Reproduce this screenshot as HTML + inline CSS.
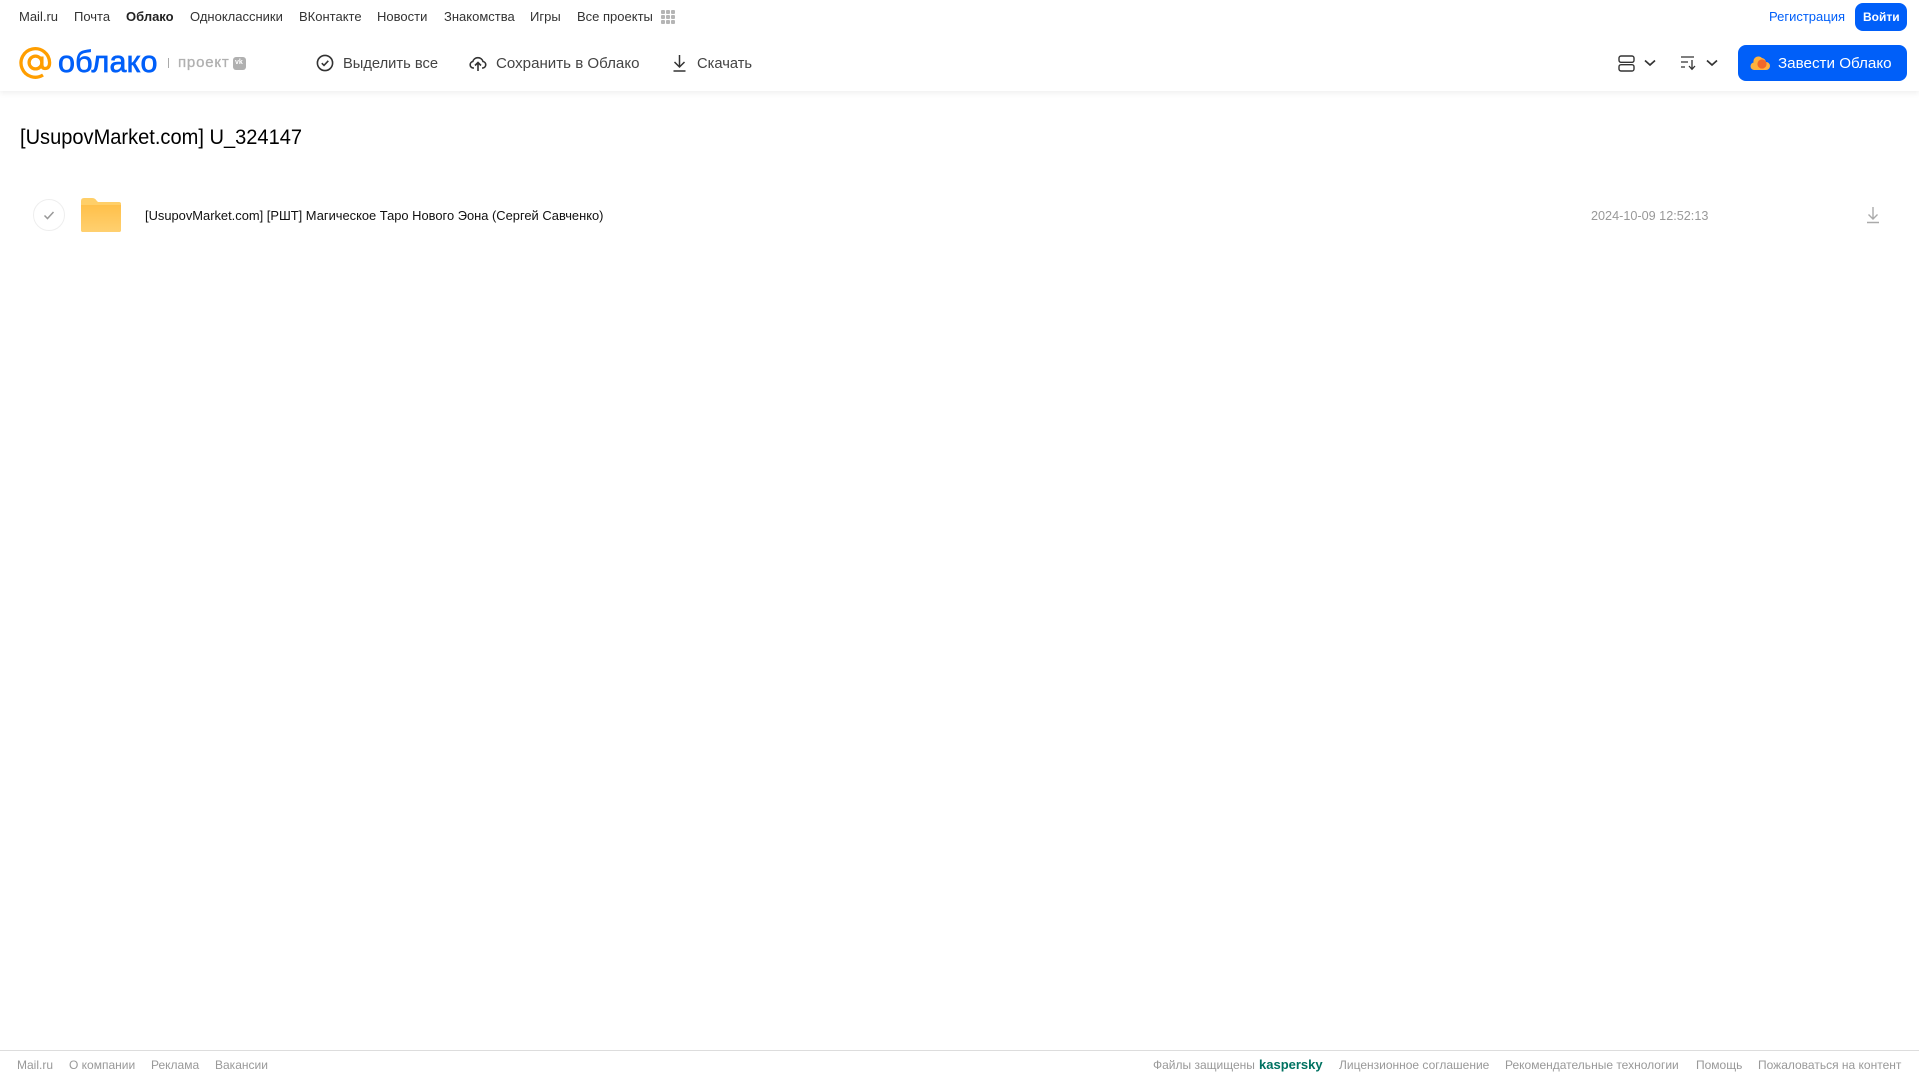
<!DOCTYPE html>
<html lang="ru"><head><meta charset="utf-8"><title>Облако</title>
<style>
html,body{margin:0;padding:0;background:#fff}
#p{position:relative;width:1919px;height:1079px;overflow:hidden;font-family:"Liberation Sans",sans-serif;background:#fff}
#p span,#p svg,#p div{position:absolute}
.t{white-space:nowrap;line-height:20px}
.n{font-size:13px;color:#333;top:7px}
.b{font-size:14.7px;color:#444;top:54px}
.f{font-size:12px;color:#999;top:1055px}
</style></head><body><div id="p">
<div style="left:0;top:0;width:1919px;height:91px;background:#fff;box-shadow:0 2px 6px rgba(0,0,0,.07)"></div>

<span class="t n" style="left:19px">Mail.ru</span>
<span class="t n" style="left:74px">Почта</span>
<span class="t n" style="left:126px;font-weight:bold;color:#222">Облако</span>
<span class="t n" style="left:190px">Одноклассники</span>
<span class="t n" style="left:299px">ВКонтакте</span>
<span class="t n" style="left:377px">Новости</span>
<span class="t n" style="left:444px">Знакомства</span>
<span class="t n" style="left:530px">Игры</span>
<span class="t n" style="left:577px">Все проекты</span>
<svg style="left:661px;top:10px" width="15" height="15" fill="#b5b5b5"><rect x="0" y="0" width="4" height="4" rx="1"/><rect x="5" y="0" width="4" height="4" rx="1"/><rect x="10" y="0" width="4" height="4" rx="1"/><rect x="0" y="5" width="4" height="4" rx="1"/><rect x="5" y="5" width="4" height="4" rx="1"/><rect x="10" y="5" width="4" height="4" rx="1"/><rect x="0" y="10" width="4" height="4" rx="1"/><rect x="5" y="10" width="4" height="4" rx="1"/><rect x="10" y="10" width="4" height="4" rx="1"/></svg>

<span class="t n" style="left:1769px;color:#005ff9">Регистрация</span>
<div style="left:1855px;top:3px;width:52px;height:28px;border-radius:8px;background:#005ff9"></div>
<span class="t" style="left:1863px;top:7px;font-size:12px;font-weight:bold;color:#fff">Войти</span>

<svg style="left:19px;top:46px" width="33" height="34" viewBox="0 0 33 34" fill="none" stroke="#ff9e00" stroke-width="3.300"><circle cx="16.500" cy="16.500" r="6.400"/><path d="M22.900 10.500V18.500Q22.900 22.500 26 22.500Q30.600 22.500 30.600 16.500A14.300 14.300 0 1 0 24 29"/></svg>
<span class="t" style="left:58px;top:45px;font-size:30.500px;line-height:34px;color:#005ff9;-webkit-text-stroke:.7px #005ff9;letter-spacing:.2px">облако</span>
<div style="left:168px;top:58px;width:1px;height:10px;background:#aaa"></div>
<span class="t" style="left:178px;top:53px;font-size:15px;color:#b0b0b0;-webkit-text-stroke:.3px #b0b0b0;letter-spacing:.8px">проект</span>
<div style="left:233px;top:57px;width:13px;height:13px;border-radius:3px;background:#b0b0b0"></div>
<span class="t" style="left:235px;top:53px;font-size:7px;font-weight:bold;color:#fff">vk</span>

<svg style="left:316px;top:54px" width="18" height="18" viewBox="0 0 18 18" fill="none" stroke="#333" stroke-width="1.600"><circle cx="9" cy="9" r="7.600"/><path d="M5.800 9.200L8 11.400L12.300 6.800"/></svg>
<span class="t b" style="left:343px">Выделить все</span>
<svg style="left:469px;top:54px" width="18" height="18" viewBox="0 0 18 18" fill="none" stroke="#333" stroke-width="1.600"><path d="M5 14H4A3.300 3.300 0 0 1 3.800 7.500A5.300 5.300 0 0 1 14 7.500A3.300 3.300 0 0 1 14 14H13"/><path d="M9 17V9M6 11.500L9 8.500L12 11.500"/></svg>
<span class="t b" style="left:496px;font-size:15.1px">Сохранить в Облако</span>
<svg style="left:672px;top:54px" width="15" height="18" viewBox="0 0 15 18" fill="none" stroke="#333" stroke-width="1.500"><path d="M7.500 1V13M2.500 8L7.500 13L12.500 8M1.500 17H13.500"/></svg>
<span class="t b" style="left:697px">Скачать</span>

<svg style="left:1618px;top:55px" width="17" height="17" viewBox="0 0 17 17" fill="none" stroke="#333" stroke-width="1.400"><rect x="1" y="1" width="15" height="6.300" rx="2"/><rect x="1" y="9.700" width="15" height="6.300" rx="2"/></svg>
<svg style="left:1644px;top:59px" width="12" height="8" viewBox="0 0 12 8" fill="none" stroke="#333" stroke-width="1.700"><path d="M1 1.500L6 6L11 1.500"/></svg>
<svg style="left:1681px;top:55px" width="16" height="16" viewBox="0 0 16 16" fill="none" stroke="#333" stroke-width="1.300"><path d="M0 2H13M0 7H7M0 12H4M11 5V14M8 11L11 14.300L14 11"/></svg>
<svg style="left:1706px;top:59px" width="12" height="8" viewBox="0 0 12 8" fill="none" stroke="#333" stroke-width="1.700"><path d="M1 1.500L6 6L11 1.500"/></svg>

<div style="left:1738px;top:45px;width:169px;height:36px;border-radius:8px;background:#005ff9"></div>
<svg style="left:1750px;top:54px" width="20" height="17" viewBox="0 0 20 17"><path d="M4 16A3.800 3.800 0 0 1 3.500 8.500A5 5 0 0 1 12 4A5 5 0 0 1 16 8A4 4 0 0 1 16 16Z" fill="#ffb23e"/><circle cx="12" cy="10" r="4.600" fill="#f2682a"/></svg>
<span class="t b" style="left:1778px;color:#fff;font-size:15.2px">Завести Облако</span>

<span class="t" style="left:20px;top:126px;font-size:21px;line-height:24px;color:#000;transform:scaleX(.955);transform-origin:0 0">[UsupovMarket.com] U_324147</span>

<svg style="left:33px;top:199px" width="32" height="32" viewBox="0 0 32 32" fill="none"><circle cx="16" cy="16" r="15.500" stroke="#eee"/><path d="M11.500 16.500L14.500 19.500L20.500 13" stroke="#999" stroke-width="1.500"/></svg>
<svg style="left:81px;top:198px" width="40" height="34" viewBox="0 0 40 34"><defs><linearGradient id="g" x1="0" y1="0" x2="0" y2="1"><stop offset="0" stop-color="#ffc04a"/><stop offset="1" stop-color="#ffd070"/></linearGradient></defs><path d="M0 3Q0 0 3 0H11Q14 0 15.500 2.500L17 4H38Q40 4 40 6V32Q40 34 38 34H2Q0 34 0 32Z" fill="#ffcf68"/><path d="M0 7H40V32Q40 34 38 34H2Q0 34 0 32Z" fill="url(#g)"/></svg>
<span class="t" style="left:145px;top:206px;font-size:12.9px;color:#111">[UsupovMarket.com] [РШТ] Магическое Таро Нового Эона (Сергей Савченко)</span>
<span class="t" style="left:1591px;top:206px;font-size:12.65px;color:#999">2024-10-09 12:52:13</span>
<svg style="left:1866px;top:206px" width="14" height="18" viewBox="0 0 14 18" fill="none" stroke="#aaa" stroke-width="1.400"><path d="M7 1V13M2.500 8.500L7 13L11.500 8.500M1 16.500H13"/></svg>

<div style="left:0;top:1050px;width:1919px;height:1px;background:#ddd"></div>
<span class="t f" style="left:17px">Mail.ru</span>
<span class="t f" style="left:69px">О компании</span>
<span class="t f" style="left:151px">Реклама</span>
<span class="t f" style="left:215px">Вакансии</span>
<span class="t f" style="left:1153px">Файлы защищены</span>
<span class="t f" style="left:1259px;font-size:13px;font-weight:bold;color:#007261">kaspersky</span>
<span class="t f" style="left:1339px">Лицензионное соглашение</span>
<span class="t f" style="left:1505px">Рекомендательные технологии</span>
<span class="t f" style="left:1696px">Помощь</span>
<span class="t f" style="left:1758px">Пожаловаться на контент</span>
</div></body></html>
